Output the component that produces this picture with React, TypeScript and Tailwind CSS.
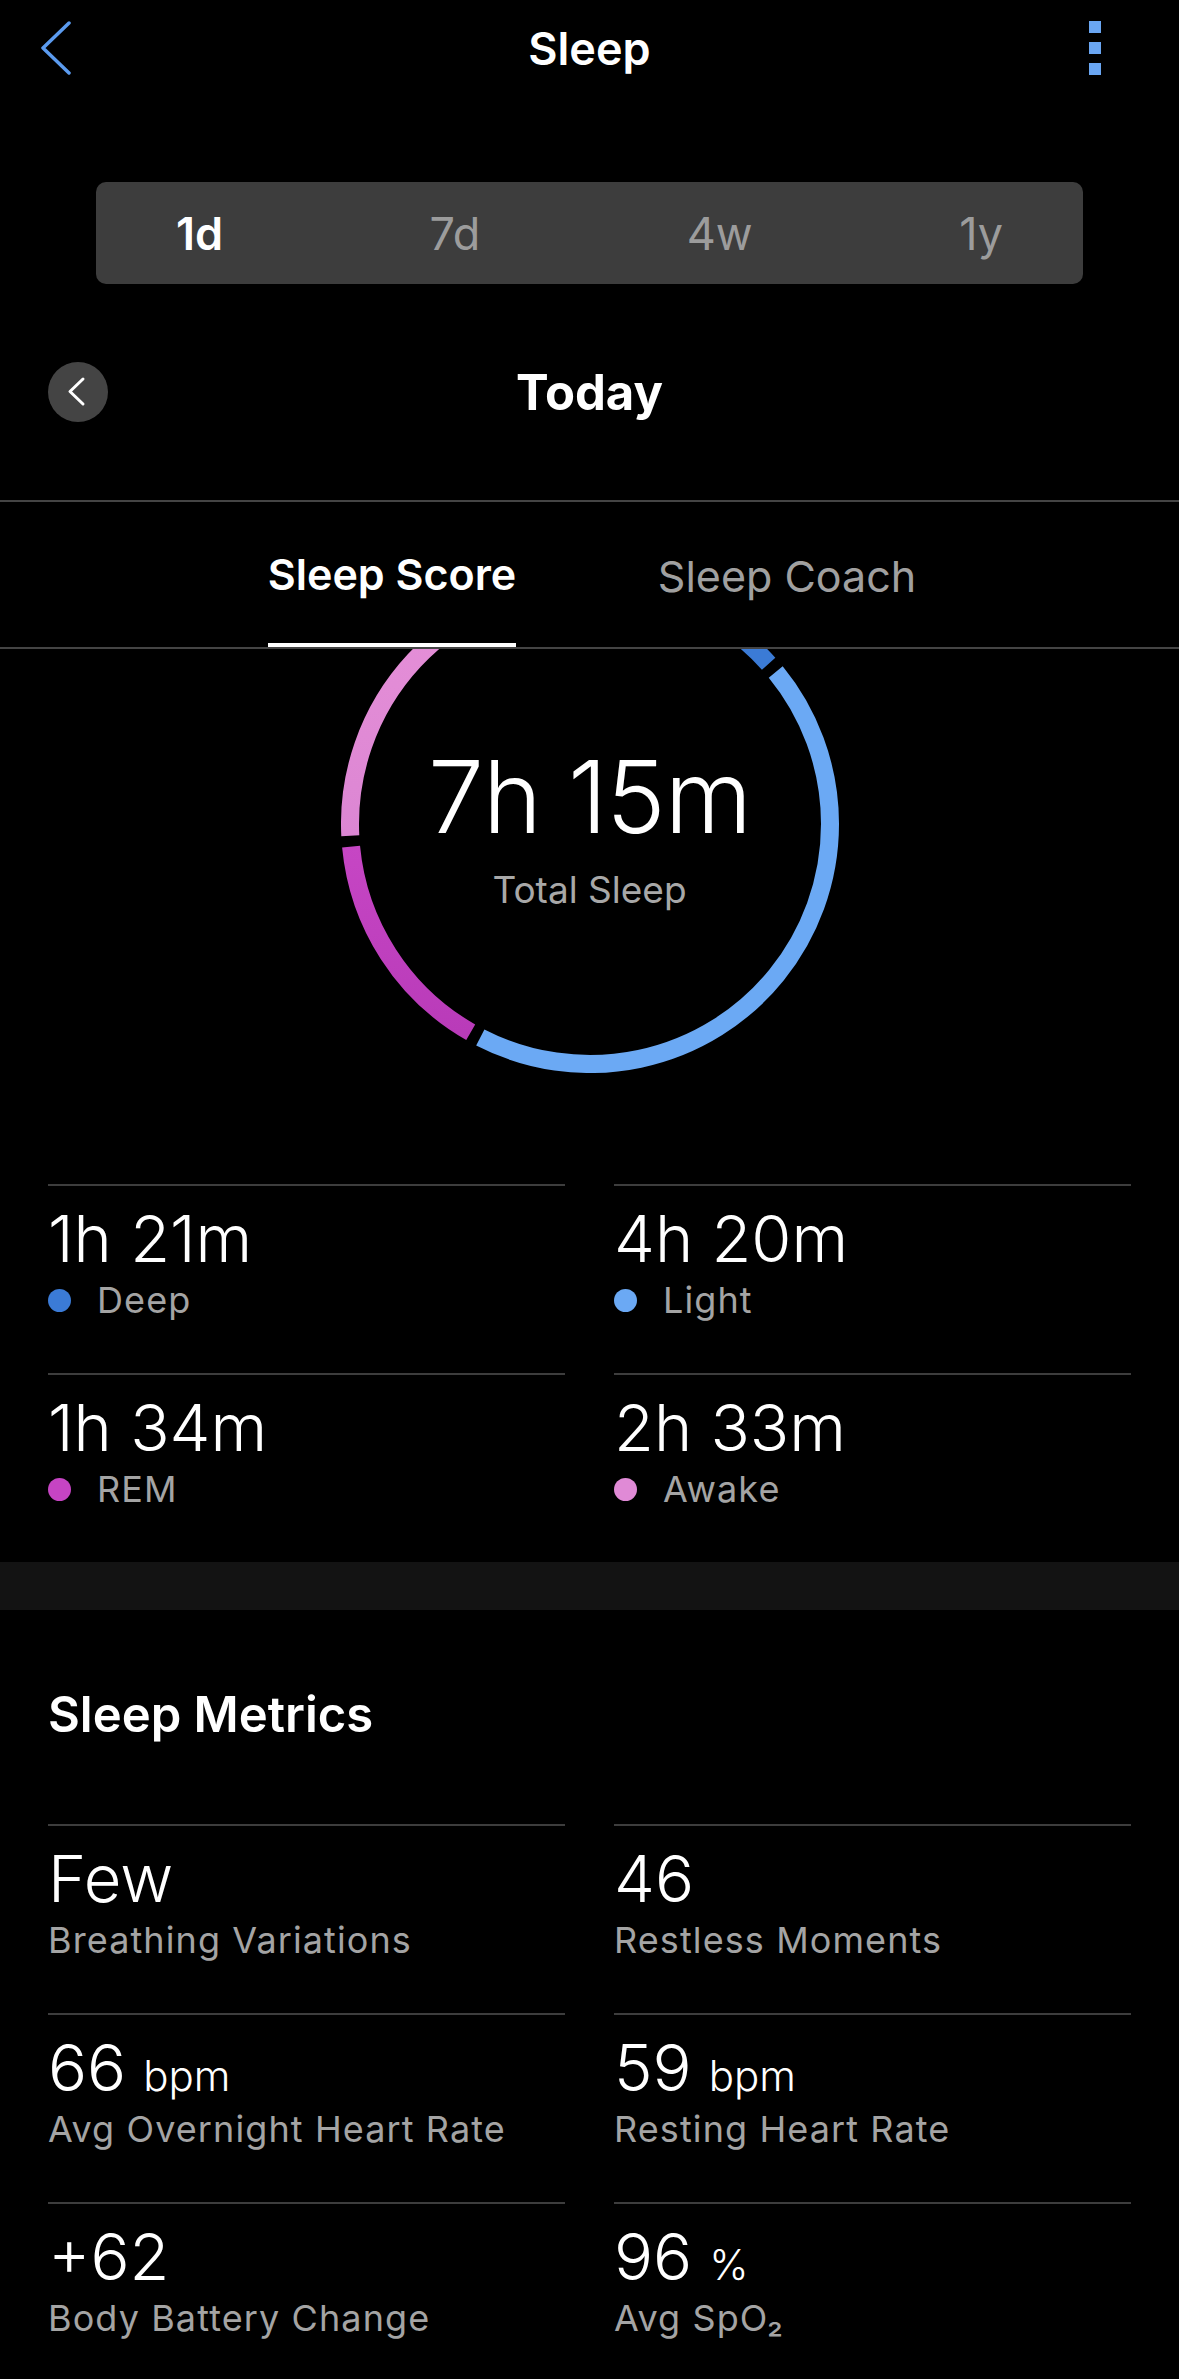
import React from 'react';

const font = { fontFamily: 'Inter, "Noto Sans", sans-serif' };

const R = 240;
const C = 249;

const arcPath = (a0: number, a1: number) => {
  const pt = (a: number) => {
    const rad = (a * Math.PI) / 180;
    return [C + R * Math.sin(rad), C - R * Math.cos(rad)];
  };
  const [x0, y0] = pt(a0);
  const [x1, y1] = pt(a1);
  const large = a1 - a0 > 180 ? 1 : 0;
  return `M ${x0} ${y0} A ${R} ${R} 0 ${large} 1 ${x1} ${y1}`;
};

const SleepRing: React.FC = () => (
  <svg width="498" height="498" viewBox="0 0 498 498" className="block">
    <defs>
      <linearGradient id="awakeGrad" x1="0" y1="0" x2="0" y2="1">
        <stop offset="0" stopColor="#e690d8" />
        <stop offset="1" stopColor="#dc86d3" />
      </linearGradient>
      <linearGradient id="remGrad" x1="0" y1="0" x2="0" y2="1">
        <stop offset="0" stopColor="#c646c4" />
        <stop offset="1" stopColor="#b93bb9" />
      </linearGradient>
    </defs>
    <path d={arcPath(1.3, 48.1)} stroke="#3b7bd6" strokeWidth="18" fill="none" />
    <path d={arcPath(50.7, 207.2)} stroke="#6ba9f4" strokeWidth="18" fill="none" />
    <path d={arcPath(209.8, 264.6)} stroke="url(#remGrad)" strokeWidth="18" fill="none" />
    <path d={arcPath(267.2, 358.7)} stroke="url(#awakeGrad)" strokeWidth="18" fill="none" />
  </svg>
);

type Stat = { value: string; unit?: string; label: string; dot?: string };

const stages: Stat[] = [
  { value: '1h 21m', label: 'Deep', dot: 'bg-[#3b7bd6]' },
  { value: '4h 20m', label: 'Light', dot: 'bg-[#6ba9f4]' },
  { value: '1h 34m', label: 'REM', dot: 'bg-[#c644c3]' },
  { value: '2h 33m', label: 'Awake', dot: 'bg-[#e08ad6]' },
];

const metrics: Stat[] = [
  { value: 'Few', label: 'Breathing Variations' },
  { value: '46', label: 'Restless Moments' },
  { value: '66', unit: 'bpm', label: 'Avg Overnight Heart Rate' },
  { value: '59', unit: 'bpm', label: 'Resting Heart Rate' },
  { value: '+62', label: 'Body Battery Change' },
  { value: '96', unit: '%', label: 'Avg SpO₂' },
];

const StatCell: React.FC<{ stat: Stat }> = ({ stat }) => (
  <div className="h-[189px] border-t-2 border-[#3d3d3d] pt-[20px]">
    <div className="flex items-baseline gap-[17px]">
      <span className="text-[65px] leading-[65px] font-light text-white">{stat.value}</span>
      {stat.unit && <span className="text-[42px] leading-[42px] font-light text-white">{stat.unit}</span>}
    </div>
    <div className="mt-[9px] flex h-[40px] items-center">
      {stat.dot && <span className={`mr-[26px] h-[23px] w-[23px] rounded-full ${stat.dot}`} />}
      <span className="text-[36px] leading-[40px] tracking-[1.1px] text-[#a4a4a4]">{stat.label}</span>
    </div>
  </div>
);

const App: React.FC = () => {
  const ranges = ['1d', '7d', '4w', '1y'];

  return (
    <div className="min-h-screen w-full overflow-hidden bg-black text-white" style={font}>
      {/* top bar */}
      <header className="flex h-[96px] items-center">
        <div className="flex w-[120px] pl-[39px]">
          <svg width="34" height="54" viewBox="0 0 34 54" fill="none">
            <path d="M30 2 L4 27 L30 52" stroke="#5b9bef" strokeWidth="3.5" strokeLinecap="round" strokeLinejoin="round" />
          </svg>
        </div>
        <h1 className="flex-1 text-center text-[45px] leading-[45px] font-semibold">Sleep</h1>
        <div className="flex w-[120px] justify-end pr-[78px]">
          <div className="flex flex-col gap-[9px]">
            <span className="h-[12px] w-[12px] bg-[#6aa6f2]" />
            <span className="h-[12px] w-[12px] bg-[#6aa6f2]" />
            <span className="h-[12px] w-[12px] bg-[#6aa6f2]" />
          </div>
        </div>
      </header>

      {/* range selector */}
      <div className="mx-[96px] mt-[86px] flex h-[102px] items-center justify-between rounded-[10px] bg-[#3d3d3d] px-[80px]">
        {ranges.map((r, i) => (
          <span
            key={r}
            className={`text-[45px] leading-[45px] ${i === 0 ? 'font-semibold text-white' : 'text-[#9c9c9c]'}`}
          >
            {r}
          </span>
        ))}
      </div>

      {/* date row */}
      <div className="mt-[78px] flex h-[60px] items-center">
        <div className="flex w-[120px] pl-[48px]">
          <div className="flex h-[60px] w-[60px] items-center justify-center rounded-full bg-[#444444]">
            <svg width="60" height="60" viewBox="0 0 60 60" fill="none">
              <path d="M35 17 L22 29.5 L35 42" stroke="#ffffff" strokeWidth="3" strokeLinecap="round" strokeLinejoin="round" />
            </svg>
          </div>
        </div>
        <div className="flex-1 text-center text-[49px] leading-[49px] font-bold">Today</div>
        <div className="w-[120px]" />
      </div>

      <div className="mt-[78px] h-[2px] bg-[#444444]" />

      {/* tabs */}
      <div className="grid h-[145px] grid-cols-[395px_395px] justify-center">
        <div className="flex justify-center">
          <div className="flex items-center border-b-4 border-white pt-[4px] text-[43px] leading-[43px] font-semibold text-white">
            Sleep Score
          </div>
        </div>
        <div className="flex justify-center">
          <div className="flex items-center pt-[4px] text-[43px] leading-[43px] text-[#a0a0a0]">Sleep Coach</div>
        </div>
      </div>
      <div className="h-[2px] bg-[#444444]" />

      {/* ring */}
      <div className="flex h-[535px] justify-center overflow-hidden">
        <div className="relative -mt-[74px] h-[498px] w-[498px]">
          <SleepRing />
          <div className="absolute inset-0 flex flex-col items-center pt-[172px]">
            <span className="text-[100px] leading-[100px] font-light tracking-[-1px] text-white">7h 15m</span>
            <span className="mt-[21px] text-[37px] leading-[44px] text-[#a8a8a8]">Total Sleep</span>
          </div>
        </div>
      </div>

      {/* stages */}
      <div className="grid grid-cols-2 gap-x-[49px] px-[48px]">
        {stages.map((s) => (
          <StatCell key={s.label} stat={s} />
        ))}
      </div>

      <div className="h-[48px] bg-[#131313]" />

      {/* metrics */}
      <div className="px-[48px] pt-[80px]">
        <h2 className="text-[49px] leading-[49px] font-semibold text-white">Sleep Metrics</h2>
      </div>
      <div className="mt-[85px] grid grid-cols-2 gap-x-[49px] px-[48px]">
        {metrics.map((m) => (
          <StatCell key={m.label} stat={m} />
        ))}
      </div>
    </div>
  );
};

export default App;
